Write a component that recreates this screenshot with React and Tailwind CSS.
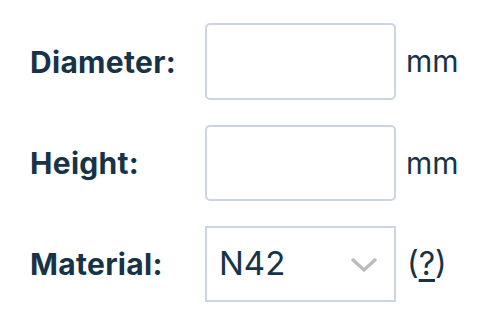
import React, { useState } from 'react';

const font = { fontFamily: 'Inter, "Noto Sans", sans-serif' };

const Row = ({ label, children, suffix }) => (
    <div className="flex items-center">
        <label className="w-[175px] shrink-0 text-[30px] font-bold text-[#173347] leading-none tracking-[0.3px]">{label}</label>
        {children}
        {suffix}
    </div>
);

const App = () => {
    const [diameter, setDiameter] = useState('');
    const [height, setHeight] = useState('');
    const [material, setMaterial] = useState('N42');

    return (
        <div className="w-[487px] h-[322px] bg-white pl-[30px] pt-[23px] flex flex-col gap-[25px]" style={font}>
            <Row label="Diameter:" suffix={<span className="ml-[10px] text-[30px] text-[#173347]">mm</span>}>
                <input
                    className="w-[191px] h-[77px] border-2 border-[#cbd5e1] rounded-[5px] px-3 text-[30px] text-[#173347] outline-none"
                    value={diameter}
                    onChange={e => setDiameter(e.target.value)}
                />
            </Row>
            <Row label="Height:" suffix={<span className="ml-[10px] text-[30px] text-[#173347]">mm</span>}>
                <input
                    className="w-[191px] h-[76px] border-2 border-[#cbd5e1] rounded-[5px] px-3 text-[30px] text-[#173347] outline-none"
                    value={height}
                    onChange={e => setHeight(e.target.value)}
                />
            </Row>
            <Row
                label="Material:"
                suffix={
                    <span className="ml-[11px] text-[32px] text-[#173347] leading-none">
                        (<span className="underline decoration-[3px] underline-offset-[4px]">?</span>)
                    </span>
                }
            >
                <div className="relative w-[191px] h-[76px] border-2 border-[#cbd5e1] flex items-center">
                    <select
                        className="appearance-none w-full h-full bg-transparent pl-[12px] text-[33px] font-normal text-[#173347] outline-none"
                        value={material}
                        onChange={e => setMaterial(e.target.value)}
                    >
                        <option>N42</option>
                        <option>N45</option>
                        <option>N52</option>
                    </select>
                    <svg className="absolute right-[16px] top-[28px] pointer-events-none" width="28" height="17" viewBox="0 0 28 17">
                        <path d="M2 3 L14 14 L26 3" fill="none" stroke="#bcbcbc" strokeWidth="3.5" />
                    </svg>
                </div>
            </Row>
        </div>
    );
};

export default App;
